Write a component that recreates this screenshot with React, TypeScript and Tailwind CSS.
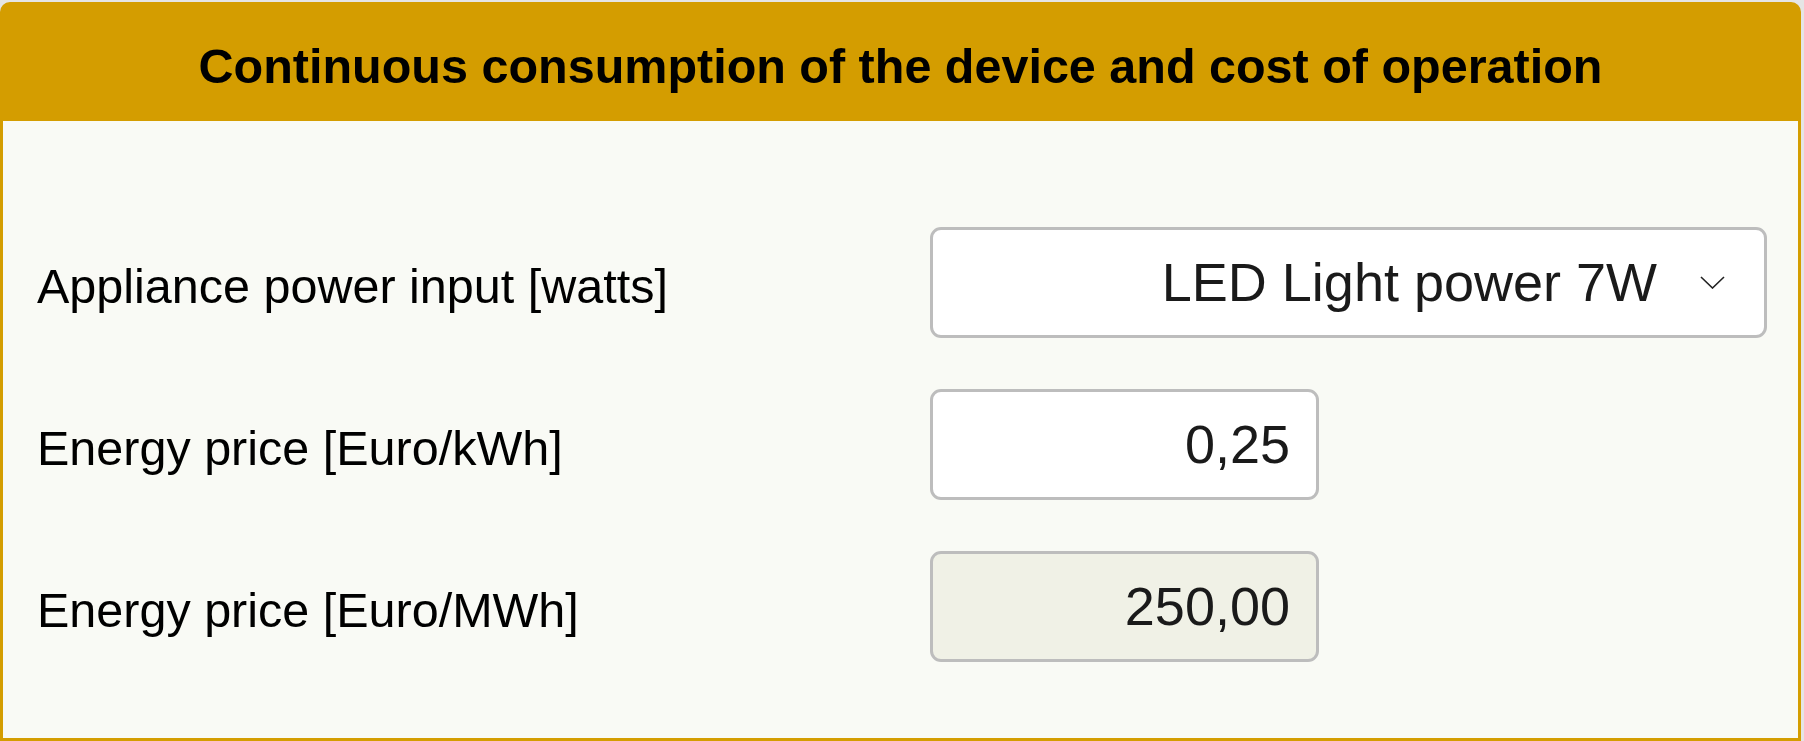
import React from "react";

function Chevron() {
  return (
    <svg width="25" height="13" viewBox="0 0 25 13" className="ml-[43px] shrink-0">
      <polyline points="1,1 12.5,12 24,1" fill="none" stroke="#222" strokeWidth="1.6" />
    </svg>
  );
}

export default function App() {
  const font = { fontFamily: '"Liberation Sans", Arial, sans-serif' };
  return (
    <div className="w-[1804px] h-[741px] bg-[#e5e5e5] overflow-hidden" style={font}>
      <div className="mt-[2px] w-[1801px] h-[739px] border-[3px] border-[#d49d00] rounded-t-[10px] bg-[#f9faf5] flex flex-col">
        <div className="h-[116px] bg-[#d49d00] pt-[25px] text-center shrink-0">
          <h1 className="text-[48.5px] font-bold text-black leading-normal">
            Continuous consumption of the device and cost of operation
          </h1>
        </div>
        <div className="flex-1 pl-[34px] pt-[106px] flex flex-col gap-[51px]">
          <div className="flex items-center">
            <div className="w-[893px] text-[48.5px] text-black leading-normal mt-[8px]">Appliance power input [watts]</div>
            <div className="w-[837px] h-[111px] bg-white border-[3px] border-[#bdbdbd] rounded-[11px] flex items-center justify-end pr-[39px] text-[54px] text-[#1a1a1a] leading-normal">
              <span>LED Light power 7W</span>
              <Chevron />
            </div>
          </div>
          <div className="flex items-center">
            <div className="w-[893px] text-[48.5px] text-black leading-normal mt-[8px]">Energy price [Euro/kWh]</div>
            <div className="w-[389px] h-[111px] bg-white border-[3px] border-[#bdbdbd] rounded-[11px] flex items-center justify-end pr-[26px] text-[54px] text-[#1a1a1a] leading-normal">
              0,25
            </div>
          </div>
          <div className="flex items-center">
            <div className="w-[893px] text-[48.5px] text-black leading-normal mt-[8px]">Energy price [Euro/MWh]</div>
            <div className="w-[389px] h-[111px] bg-[#f0f1e6] border-[3px] border-[#bdbdbd] rounded-[11px] flex items-center justify-end pr-[26px] text-[54px] text-[#1a1a1a] leading-normal">
              250,00
            </div>
          </div>
        </div>
      </div>
    </div>
  );
}
